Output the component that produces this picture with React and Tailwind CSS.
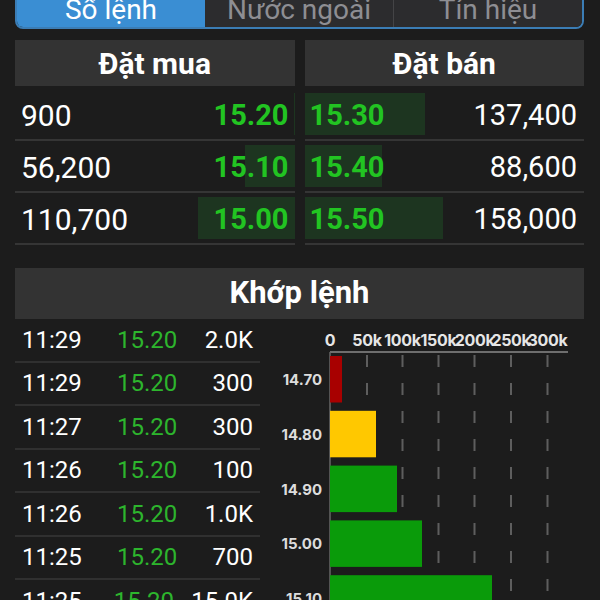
import React from "react";

const buys = [
  { qty: "900", price: "15.20", vol: 900 },
  { qty: "56,200", price: "15.10", vol: 56200 },
  { qty: "110,700", price: "15.00", vol: 110700 },
];
const sells = [
  { qty: "137,400", price: "15.30", vol: 137400 },
  { qty: "88,600", price: "15.40", vol: 88600 },
  { qty: "158,000", price: "15.50", vol: 158000 },
];
const matches = [
  ["11:29", "15.20", "2.0K"],
  ["11:29", "15.20", "300"],
  ["11:27", "15.20", "300"],
  ["11:26", "15.20", "100"],
  ["11:26", "15.20", "1.0K"],
  ["11:25", "15.20", "700"],
  ["11:25", "15.20", "15.0K"],
];
const MAX = 320000;

function Chart() {
  const ticks = [
    ["0", 70],
    ["50k", 107],
    ["100k", 142.5],
    ["150k", 178.5],
    ["200k", 214.5],
    ["250k", 251],
    ["300k", 287.5],
  ];
  const bars = [
    ["14.70", 12, "#a80000"],
    ["14.80", 46, "#ffc800"],
    ["14.90", 67, "#0a9b0a"],
    ["15.00", 92, "#0a9b0a"],
    ["15.10", 162, "#0a9b0a"],
  ];
  return (
    <svg width="324" height="281" className="block">
      {ticks.map(([t, x]) => (
        <text
          key={t}
          x={x}
          y={27}
          textAnchor="middle"
          fontFamily="Inter, sans-serif"
          fontWeight="700"
          fontSize="16"
          letterSpacing="-0.3"
          fill="#e6e6e6"
        >
          {t}
        </text>
      ))}
      {ticks.slice(1).map(([t, x]) => (
        <line
          key={"g" + t}
          x1={x}
          x2={x}
          y1={34}
          y2={281}
          stroke="#5e5e5e"
          strokeWidth="2"
          strokeDasharray="12 16"
          strokeDashoffset="-2"
        />
      ))}
      <line x1={70} x2={308} y1={33} y2={33} stroke="#8a8a8a" strokeWidth="1.5" />
      <line x1={70} x2={70} y1={33} y2={281} stroke="#666" strokeWidth="1.5" />
      {bars.map(([label, w, c], i) => {
        const top = 37 + i * 54.8;
        return (
          <g key={label}>
            <rect x={70} y={top} width={w} height={46.5} fill={c} />
            <text
              x={62}
              y={top + 29}
              textAnchor="end"
              fontFamily="Inter, sans-serif"
              fontWeight="700"
              fontSize="15"
              fill="#dcdcdc"
            >
              {label}
            </text>
          </g>
        );
      })}
    </svg>
  );
}

export default function App() {
  return (
    <div className="w-[600px] h-[600px] overflow-hidden bg-[#1c1c1c] pl-[15px] pr-[16px] font-['Roboto',sans-serif] text-white">
      {/* Tabs */}
      <div className="-mt-[15px] h-[44px] flex rounded-[8px] border-2 border-[#3b7db5] overflow-hidden">
        <div className="flex-1 bg-[#3a8ed3] flex items-center justify-center pt-[5px] text-[28px] text-white">
          Sổ lệnh
        </div>
        <div className="flex-1 bg-[#2c2c2e] flex items-center justify-center pt-[5px] text-[28px] text-[#8e8e93] border-r border-[#444446]">
          Nước ngoài
        </div>
        <div className="flex-1 bg-[#2c2c2e] flex items-center justify-center pt-[5px] text-[28px] text-[#8e8e93]">
          Tín hiệu
        </div>
      </div>

      {/* Order book */}
      <div className="mt-[11px] grid grid-cols-2 gap-x-[10px]">
        <div>
          <div className="h-[46px] bg-[#333333] flex items-center justify-center text-[30px] font-bold">
            Đặt mua
          </div>
          <div className="mt-[3px]">
            {buys.map((r) => (
              <div
                key={r.price}
                className="relative h-[52px] border-b-2 border-[#353535] flex items-center justify-between px-[6px] pt-[3px]"
              >
                <div
                  className="absolute right-0 top-[4px] h-[42px] bg-[#1d3520]"
                  style={{ width: `${(r.vol / MAX) * 100}%` }}
                />
                <span className="relative text-[30px]">{r.qty}</span>
                <span className="relative text-[29px] font-bold text-[#22c422]">{r.price}</span>
              </div>
            ))}
          </div>
        </div>
        <div>
          <div className="h-[46px] bg-[#333333] flex items-center justify-center text-[30px] font-bold">
            Đặt bán
          </div>
          <div className="mt-[3px]">
            {sells.map((r) => (
              <div
                key={r.price}
                className="relative h-[52px] border-b-2 border-[#353535] flex items-center justify-between pl-[5px] pr-[7px] pt-[3px]"
              >
                <div
                  className="absolute left-0 top-[4px] h-[42px] bg-[#1d3520]"
                  style={{ width: `${(r.vol / MAX) * 100}%` }}
                />
                <span className="relative text-[29px] font-bold text-[#22c422]">{r.price}</span>
                <span className="relative text-[29px]">{r.qty}</span>
              </div>
            ))}
          </div>
        </div>
      </div>

      {/* Khớp lệnh */}
      <div className="mt-[23px] h-[51px] bg-[#333333] flex items-center justify-center text-[31px] font-bold">
        Khớp lệnh
      </div>
      <div className="flex">
        <div className="w-[245px] shrink-0">
          {matches.map((m, i) => (
            <div
              key={i}
              className="h-[43.5px] border-b-2 border-[#303030] flex items-center pl-[7px] pr-[7px] text-[24px]"
            >
              <span className="w-[95px]">{m[0]}</span>
              <span className="w-[80px] text-[#2db52d]">{m[1]}</span>
              <span className="flex-1 text-right">{m[2]}</span>
            </div>
          ))}
        </div>
        <Chart />
      </div>
    </div>
  );
}
